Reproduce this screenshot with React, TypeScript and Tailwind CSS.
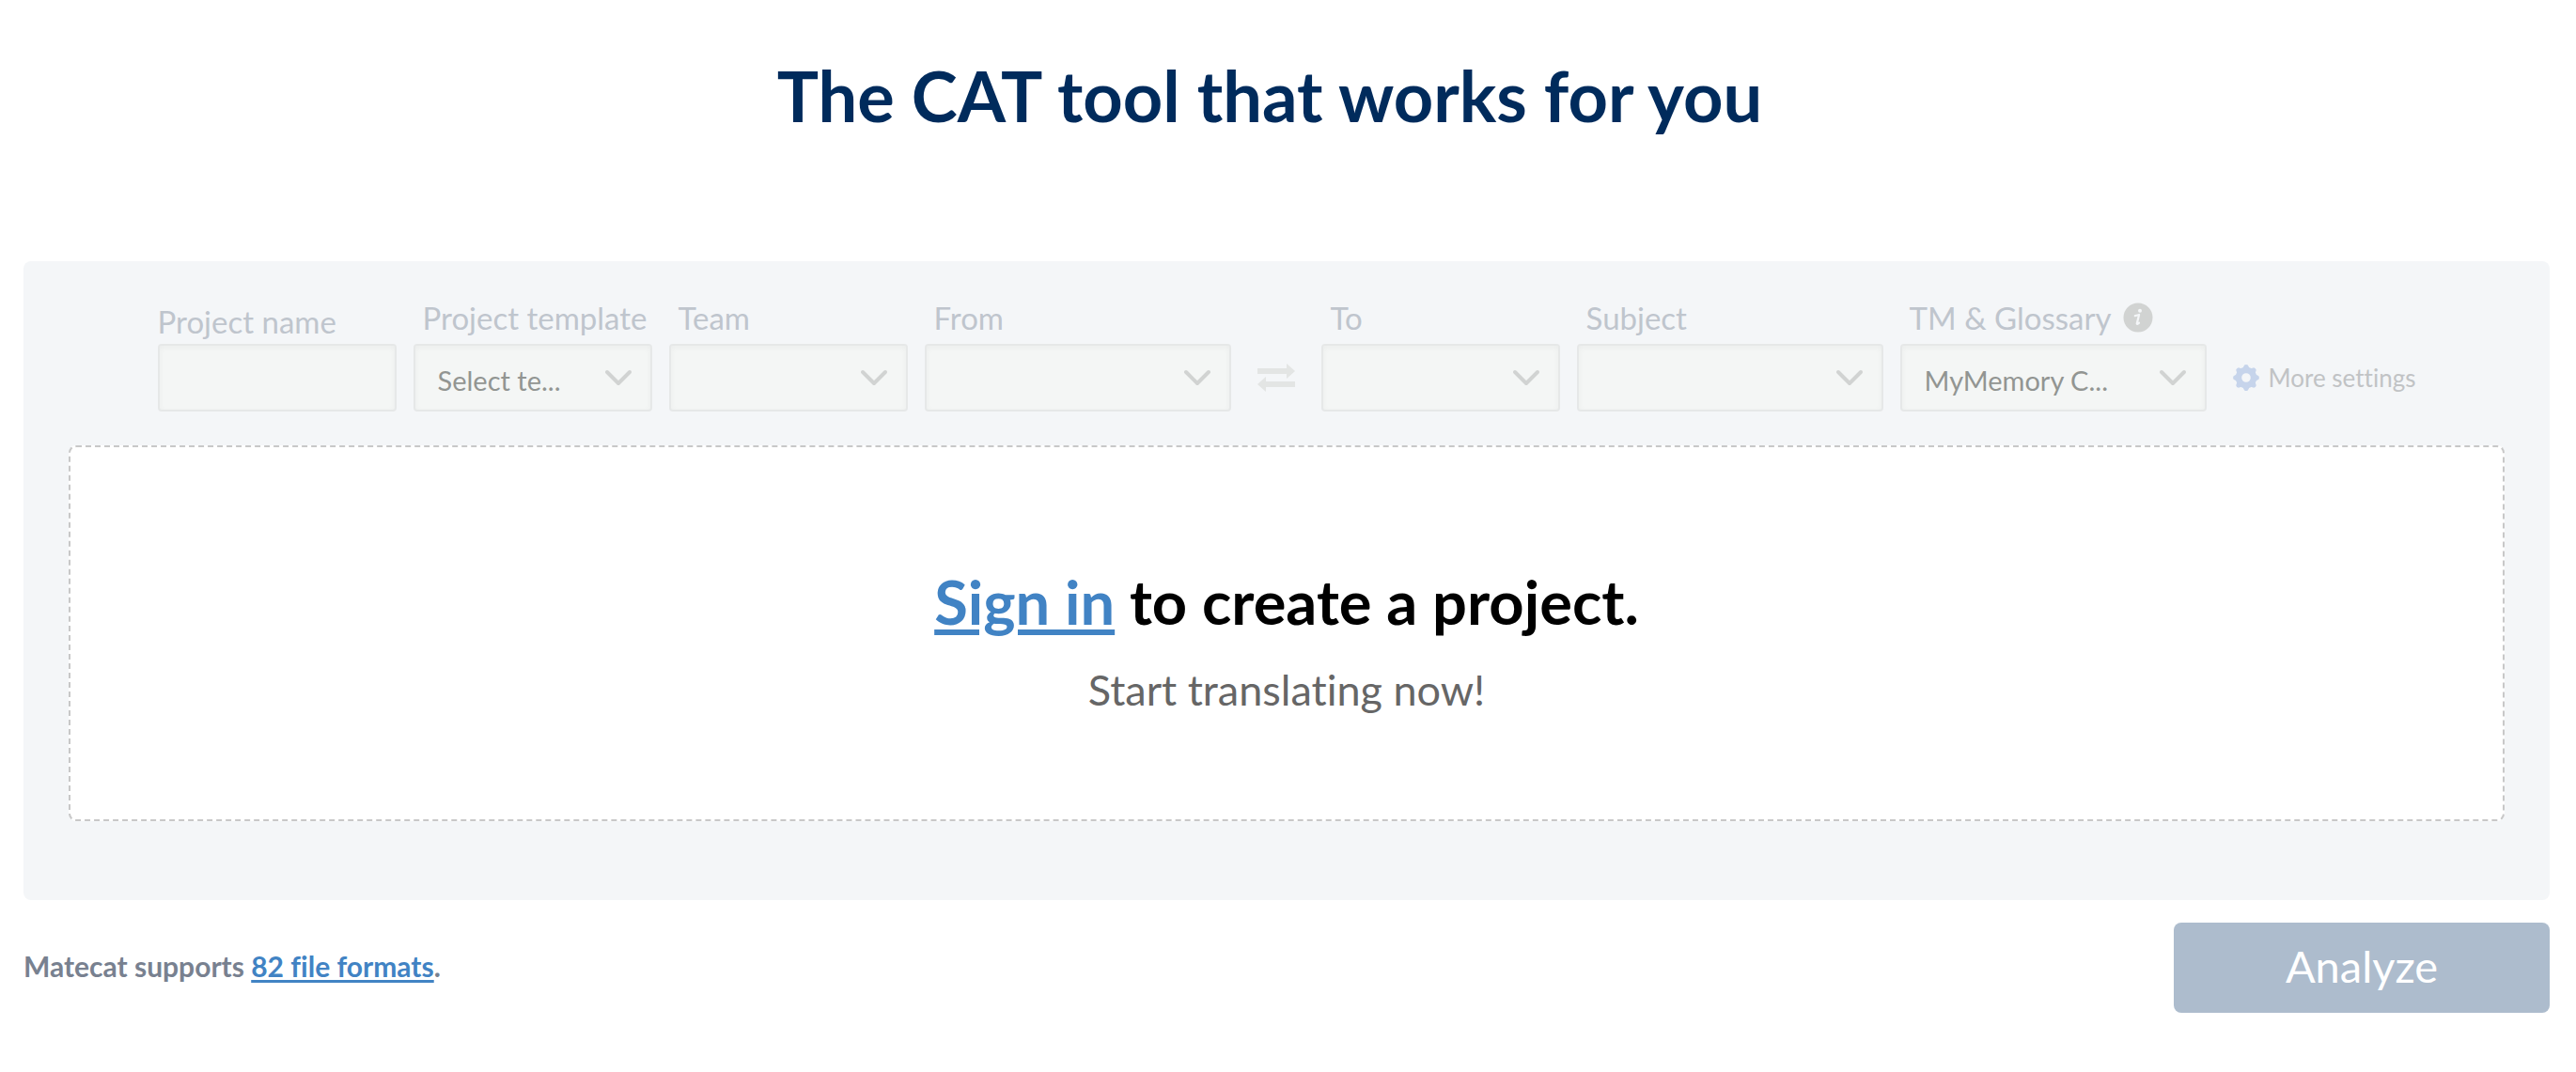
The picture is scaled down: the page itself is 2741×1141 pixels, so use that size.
import React from 'react';

interface Field {
    id: string;
    label: string;
    width: string;
    value?: string;
    info?: boolean;
}

const beforeSwap: Field[] = [
    { id: 'template', label: 'Project template', width: 'w-[254px]', value: 'Select te...' },
    { id: 'team', label: 'Team', width: 'w-[254px]' },
    { id: 'source', label: 'From', width: 'w-[326px]' },
];

const afterSwap: Field[] = [
    { id: 'target', label: 'To', width: 'w-[254px]' },
    { id: 'subject', label: 'Subject', width: 'w-[326px]' },
    { id: 'tm', label: 'TM & Glossary', width: 'w-[326px]', value: 'MyMemory C...', info: true },
];

const InfoIcon = () => (
    <svg width="32" height="32" viewBox="0 0 32 32" aria-hidden="true">
        <circle cx="16" cy="16" r="15.5" fill="#d1d3d2" />
        <circle cx="18" cy="8.8" r="2" fill="#f4f6f8" />
        <path d="M12.8 14.2c1.6-.3 3-.8 4.3-1.2l-2.3 9.2c-.2 1 .6 1 2.2-.6" fill="none" stroke="#f4f6f8" strokeWidth="2.2" strokeLinecap="round" strokeLinejoin="round" />
    </svg>
);

const Chevron = () => (
    <svg
        className="pointer-events-none absolute right-[21px] top-[26px]"
        width="30"
        height="20"
        viewBox="0 0 30 20"
        fill="none"
        stroke="#d1d3d2"
        strokeWidth="4"
        strokeLinecap="round"
        strokeLinejoin="round"
        aria-hidden="true"
    >
        <path d="M3 4L15 16L27 4" />
    </svg>
);

const SwapIcon = () => (
    <svg width="40" height="30" viewBox="0 0 40 30" fill="#e3e5e4" aria-hidden="true">
        <path d="M0 5h31V0L40 8l-9 8V11H0z" />
        <path d="M40 25H9v5L0 22l9-8V19h31z" />
    </svg>
);

const teeth = [0, 45, 90, 135, 180, 225, 270, 315];

const GearIcon = () => (
    <svg width="28" height="28" viewBox="0 0 28 28" fill="#c6d4eb" aria-hidden="true">
        {teeth.map((angle) => (
            <path key={angle} d="M9.8 5L12.2 0.6Q14 -0.4 15.8 0.6L18.2 5z" transform={`rotate(${angle} 14 14)`} />
        ))}
        <circle cx="14" cy="14" r="8" fill="none" stroke="#c6d4eb" strokeWidth="6.4" />
    </svg>
);

const SelectField = ({ field }: { field: Field }) => (
    <div className={field.width}>
        <div className="mb-2.5 flex items-center gap-3 pl-[10px]">
            <label htmlFor={field.id} className="whitespace-nowrap text-[33px] leading-9 text-[#bfc5cd]">
                {field.label}
            </label>
            {field.info && <InfoIcon />}
        </div>
        <div className="relative">
            <select
                id={field.id}
                disabled
                className="h-[72px] w-full appearance-none rounded border-2 border-[#e6e8e8] bg-[#f4f6f5] pl-6 pr-14 pt-1.5 text-[29px] text-[#929592] opacity-100 shadow-[inset_0_2px_6px_rgba(0,0,0,0.04)]"
            >
                <option>{field.value ?? ''}</option>
            </select>
            <Chevron />
        </div>
    </div>
);

export default function App() {
    return (
        <main className="min-h-screen bg-white pl-[25px] pr-7 font-['Lato','Liberation_Sans',sans-serif] [font-variant-ligatures:none]">
            <h1 className="pb-[132px] pr-9 pt-[58px] text-center text-[74px] font-bold leading-[88px] text-[#002b5c]">
                The CAT tool that works for you
            </h1>

            <section className="rounded-lg bg-[#f4f6f8] px-12 pb-[84px] pt-[42px]">
                <div className="flex items-end justify-center gap-[18px]">
                    <div className="w-[254px]">
                        <label htmlFor="name" className="mb-1.5 block text-[33px] leading-9 text-[#bfc5cd]">
                            Project name
                        </label>
                        <input
                            id="name"
                            type="text"
                            disabled
                            className="block h-[72px] w-full rounded border-2 border-[#e6e8e8] bg-[#f4f6f5] px-6 text-[29px] shadow-[inset_0_2px_6px_rgba(0,0,0,0.04)]"
                        />
                    </div>
                    {beforeSwap.map((field) => (
                        <SelectField key={field.id} field={field} />
                    ))}
                    <button type="button" disabled aria-label="Swap languages" className="flex h-[72px] w-[60px] items-center justify-center">
                        <SwapIcon />
                    </button>
                    {afterSwap.map((field) => (
                        <SelectField key={field.id} field={field} />
                    ))}
                    <button type="button" disabled className="flex h-[72px] items-center gap-2.5 whitespace-nowrap pl-2.5 text-[26px] text-[#c1c3c5]">
                        <GearIcon />
                        More settings
                    </button>
                </div>

                <div className="mt-9 rounded-lg border-2 border-dashed border-[#c8c8c8] bg-white pb-[112px] pt-[124px] text-center">
                    <h2 className="text-[65px] font-bold leading-[80px] text-black">
                        <a href="#signin" className="text-[#4183c4] underline decoration-[6px] underline-offset-[5px]">Sign in</a> to create a project.
                    </h2>
                    <p className="mt-7 text-[45px] leading-[52px] text-[#666666]">Start translating now!</p>
                </div>
            </section>

            <footer className="flex items-center justify-between pt-6">
                <p className="pb-1 text-[30px] font-bold leading-9 text-[#788190]">
                    Matecat supports{' '}
                    <a href="#formats" className="text-[#4183c4] underline decoration-[3px] underline-offset-[3px]">82 file formats</a>.
                </p>
                <button type="button" disabled className="h-24 w-[400px] rounded-lg bg-[#adbccd] pb-1 text-[47px] text-white">
                    Analyze
                </button>
            </footer>
        </main>
    );
}
